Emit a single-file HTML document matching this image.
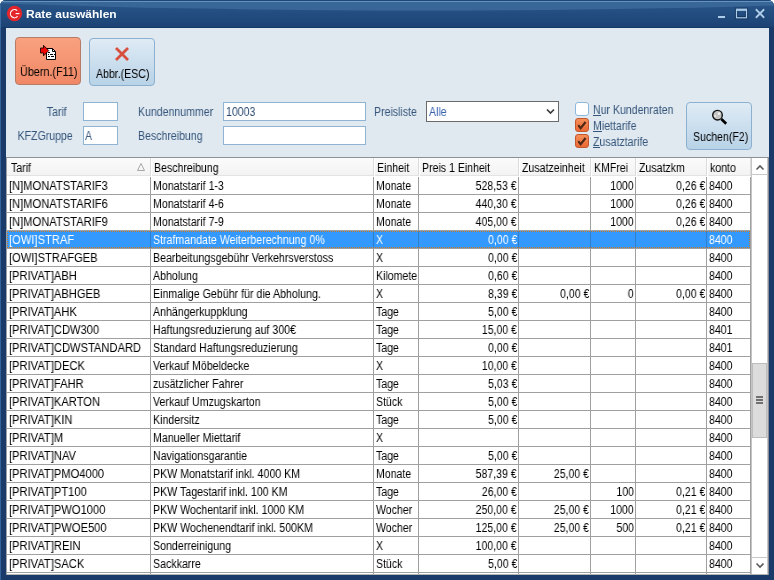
<!DOCTYPE html><html><head><meta charset="utf-8"><style>
*{margin:0;padding:0;box-sizing:border-box}
html,body{width:774px;height:580px;overflow:hidden;background:#ffffff}
body{position:relative;font-family:"Liberation Sans",sans-serif;font-size:12px;line-height:14px;color:#000}
.a{position:absolute}
.t{position:absolute;will-change:transform;white-space:pre;line-height:14px;font-size:12px;transform:scaleX(0.88)}
</style></head><body>
<div class="a" style="left:0;top:0;width:774px;height:580px;background:#1a3a6a;border-radius:6px 6px 0 0;overflow:hidden">
<svg class="a" style="left:0;top:0" width="774" height="28" viewBox="0 0 774 28">
<defs><linearGradient id="tg" x1="0" y1="0" x2="0" y2="1"><stop offset="0" stop-color="#2a578a"/><stop offset="0.4" stop-color="#244f82"/><stop offset="1" stop-color="#1c4273"/></linearGradient>
<linearGradient id="tb" x1="0" y1="0" x2="0" y2="1"><stop offset="0" stop-color="#3d6c9b"/><stop offset="1" stop-color="#386696"/></linearGradient></defs>
<rect x="0" y="0" width="774" height="28" fill="url(#tg)"/>
<ellipse cx="420" cy="-40" rx="815" ry="50.5" fill="url(#tb)"/>
<rect x="0" y="0" width="774" height="1" fill="#1f4677"/>
<rect x="0" y="1" width="774" height="1" fill="#6393bf"/>
<rect x="0" y="27" width="774" height="1" fill="#163a68"/>
</svg>
<div class="a" style="left:0;top:1px;width:1px;height:579px;background:#3a6a9e"></div>
<div class="a" style="left:1px;top:28px;width:1px;height:552px;background:#24528a"></div>
</div>
<svg class="a" style="left:6px;top:5px" width="18" height="18" viewBox="0 0 18 18">
<circle cx="8.5" cy="8.5" r="7.7" fill="#e3262a"/>
<path d="M11.2 5.6 A4.1 4.1 0 1 0 11.6 11.4" fill="none" stroke="#fff" stroke-width="1.15"/>
<path d="M9.6 8.6 H13.4" stroke="#fff" stroke-width="1.15"/>
</svg>
<div class="t " style="top:7px;left:26px;transform-origin:0 0;transform:scaleX(1.09);color:#ffffff;font-weight:bold;font-size:11px;">Rate auswählen</div>
<svg class="a" style="left:714px;top:6px" width="56" height="16" viewBox="0 0 56 16">
<g fill="none" stroke="#0d2445" stroke-width="3.2" opacity=".55">
<path d="M4 11 H11"/><rect x="22.5" y="3.2" width="10" height="8.6"/><path d="M41.8 3.3 L50.2 11.7 M50.2 3.3 L41.8 11.7"/>
</g>
<g fill="none" stroke="#a9cdeb">
<path d="M4 11 H11" stroke-width="2.2"/>
<rect x="22.5" y="3.2" width="10" height="8.6" stroke-width="1.2"/><path d="M22 4 H33" stroke-width="1.8"/>
<path d="M41.8 3.3 L50.2 11.7 M50.2 3.3 L41.8 11.7" stroke-width="2"/>
</g></svg>
<div class="a" style="left:6px;top:28px;width:763px;height:547px;background:#e0e8f0"></div>
<div class="a" style="left:15px;top:37px;width:66px;height:48px;border:1px solid #b67c68;border-radius:4px;background:linear-gradient(#f9a17f,#f08866)"></div>
<div class="a" style="left:89px;top:38px;width:66px;height:48px;border:1px solid #8bb0d0;border-radius:4px;background:linear-gradient(#dfebf5,#b8d2e7)"></div>
<svg class="a" style="left:30px;top:40px" width="36" height="24" viewBox="30 40 36 24">
<path d="M46.5 48.5 H52.5 L55.5 51.5 V59.5 H46.5 Z" fill="#fff" stroke="#000" stroke-width="1"/>
<path d="M52.5 48.5 V51.5 H55.5" fill="none" stroke="#000" stroke-width="1"/>
<path d="M48 52.5 H50 M48 54.5 H49 M50 54.5 H53 M54 54.5 H55 M48 56.5 H50 M51 56.5 H54" stroke="#000" stroke-width="1"/>
<path d="M40.5 48 H43.5 V45.3 L48.8 50.6 L43.5 55.9 V53 H40.5 Z" fill="#f00000" stroke="#000" stroke-width="0.8"/>
</svg>
<div class="t " style="top:65px;left:20px;transform-origin:0 0;transform:scaleX(0.9);">Übern.(F11)</div>
<svg class="a" style="left:113px;top:45px" width="18" height="18" viewBox="0 0 18 18">
<path d="M3 3 L15 15 M15 3 L3 15" stroke="#d94f3d" stroke-width="2.8"/>
</svg>
<div class="t " style="top:67px;left:96px;transform-origin:0 0;">Abbr.(ESC)</div>
<div class="t " style="top:105px;right:707px;transform-origin:100% 0;color:#34567a;">Tarif</div>
<div class="t " style="top:129px;right:701px;transform-origin:100% 0;color:#34567a;">KFZGruppe</div>
<div class="t " style="top:105px;left:138px;transform-origin:0 0;color:#34567a;">Kundennummer</div>
<div class="t " style="top:129px;left:138px;transform-origin:0 0;color:#34567a;">Beschreibung</div>
<div class="t " style="top:105px;left:374px;transform-origin:0 0;color:#34567a;">Preisliste</div>
<div class="a" style="left:83px;top:102px;width:35px;height:19px;background:#fff;border:1px solid #8fb3d3"></div>
<div class="a" style="left:83px;top:126px;width:35px;height:19px;background:#fff;border:1px solid #8fb3d3"></div>
<div class="t " style="top:129px;left:85px;transform-origin:0 0;color:#3b5b80;">A</div>
<div class="a" style="left:223px;top:102px;width:143px;height:19px;background:#fff;border:1px solid #8fb3d3"></div>
<div class="a" style="left:223px;top:126px;width:143px;height:19px;background:#fff;border:1px solid #8fb3d3"></div>
<div class="t " style="top:105px;left:226px;transform-origin:0 0;color:#2c4a70;">10003</div>
<div class="a" style="left:426px;top:101px;width:133px;height:21px;background:#fff;border:1px solid #6a6a6a"></div>
<div class="t " style="top:105px;left:429px;transform-origin:0 0;color:#3560b0;">Alle</div>
<svg class="a" style="left:545px;top:107px" width="11" height="9" viewBox="0 0 11 9">
<path d="M2 2.5 L5.5 6 L9 2.5" fill="none" stroke="#3c3c3c" stroke-width="1.7"/>
</svg>
<div class="a" style="left:575px;top:102px;width:14px;height:14px;border:1px solid #8db8de;border-radius:3px;background:#fff"></div>
<div class="a" style="left:575px;top:118px;width:14px;height:14px;border:1px solid #c4562c;border-radius:3px;background:linear-gradient(#f68e58,#ea6a34)"></div>
<svg class="a" style="left:575px;top:118px" width="14" height="14" viewBox="0 0 14 14"><path d="M3.3 7.2 L5.6 10.2 L10.6 4" fill="none" stroke="#4e2818" stroke-width="2.2"/></svg>
<div class="a" style="left:575px;top:134px;width:14px;height:14px;border:1px solid #c4562c;border-radius:3px;background:linear-gradient(#f68e58,#ea6a34)"></div>
<svg class="a" style="left:575px;top:134px" width="14" height="14" viewBox="0 0 14 14"><path d="M3.3 7.2 L5.6 10.2 L10.6 4" fill="none" stroke="#4e2818" stroke-width="2.2"/></svg>
<div class="t " style="top:103px;left:593px;transform-origin:0 0;color:#34567a;">Nur Kundenraten</div>
<div class="t " style="top:119px;left:593px;transform-origin:0 0;color:#34567a;">Miettarife</div>
<div class="t " style="top:135px;left:593px;transform-origin:0 0;color:#34567a;">Zusatztarife</div>
<div class="a" style="left:593px;top:115px;width:8px;height:1px;background:#34567a"></div>
<div class="a" style="left:593px;top:131px;width:9px;height:1px;background:#34567a"></div>
<div class="a" style="left:593px;top:147px;width:7px;height:1px;background:#34567a"></div>
<div class="a" style="left:686px;top:102px;width:66px;height:48px;border:1px solid #8bb0d0;border-radius:4px;background:linear-gradient(#dfebf5,#b8d2e7)"></div>
<svg class="a" style="left:710px;top:108px" width="20" height="18" viewBox="0 0 20 18">
<path d="M11.3 11 L16.2 15.8" stroke="#000" stroke-width="2.6"/>
<circle cx="7.5" cy="7.2" r="4.8" fill="#c4c4c4" stroke="#111" stroke-width="1.4"/>
<circle cx="9" cy="5.6" r="1.3" fill="#f4f4f4"/>
<circle cx="5.2" cy="8" r="1" fill="#eeeeee"/>
</svg>
<div class="t " style="top:130px;left:693px;transform-origin:0 0;">Suchen(F2)</div>
<div class="a" style="left:6px;top:157px;width:763px;height:418px;background:#fff;border-left:1px solid #9aa0a8;border-top:1px solid #8c9198;border-right:1px solid #8a8e96"></div>
<div class="a" style="left:767px;top:158px;width:1px;height:417px;background:#c6c6c6"></div>
<div class="a" style="left:7px;top:158px;width:744px;height:18px;background:linear-gradient(#fbfbfb,#f3f3f3);border-bottom:1px solid #e3e3e3"></div>
<div class="a" style="left:150px;top:158px;width:1px;height:18px;background:#dcdcdc"></div>
<div class="a" style="left:151px;top:158px;width:1px;height:18px;background:#ffffff"></div>
<div class="a" style="left:373px;top:158px;width:1px;height:18px;background:#dcdcdc"></div>
<div class="a" style="left:374px;top:158px;width:1px;height:18px;background:#ffffff"></div>
<div class="a" style="left:418px;top:158px;width:1px;height:18px;background:#dcdcdc"></div>
<div class="a" style="left:419px;top:158px;width:1px;height:18px;background:#ffffff"></div>
<div class="a" style="left:518px;top:158px;width:1px;height:18px;background:#dcdcdc"></div>
<div class="a" style="left:519px;top:158px;width:1px;height:18px;background:#ffffff"></div>
<div class="a" style="left:590px;top:158px;width:1px;height:18px;background:#dcdcdc"></div>
<div class="a" style="left:591px;top:158px;width:1px;height:18px;background:#ffffff"></div>
<div class="a" style="left:635px;top:158px;width:1px;height:18px;background:#dcdcdc"></div>
<div class="a" style="left:636px;top:158px;width:1px;height:18px;background:#ffffff"></div>
<div class="a" style="left:706px;top:158px;width:1px;height:18px;background:#dcdcdc"></div>
<div class="a" style="left:707px;top:158px;width:1px;height:18px;background:#ffffff"></div>
<div class="a" style="left:750px;top:158px;width:1px;height:18px;background:#dcdcdc"></div>
<div class="t " style="top:161px;left:11px;transform-origin:0 0;">Tarif</div>
<div class="t " style="top:161px;left:154px;transform-origin:0 0;">Beschreibung</div>
<div class="t " style="top:161px;left:377px;transform-origin:0 0;">Einheit</div>
<div class="t " style="top:161px;left:422px;transform-origin:0 0;">Preis 1 Einheit</div>
<div class="t " style="top:161px;left:522px;transform-origin:0 0;">Zusatzeinheit</div>
<div class="t " style="top:161px;left:594px;transform-origin:0 0;">KMFrei</div>
<div class="t " style="top:161px;left:639px;transform-origin:0 0;">Zusatzkm</div>
<div class="t " style="top:161px;left:710px;transform-origin:0 0;">konto</div>
<svg class="a" style="left:136px;top:162px" width="10" height="10" viewBox="0 0 10 10"><path d="M5 1.5 L8.5 8.5 H1.5 Z" fill="none" stroke="#a8a8a8" stroke-width="1"/></svg>
<div class="a" style="left:7px;top:194px;width:744px;height:1px;background:#a0a0a0"></div>
<div class="t " style="top:179px;left:9px;transform-origin:0 0;transform:scaleX(0.93);">[N]MONATSTARIF3</div>
<div class="t " style="top:179px;left:153px;transform-origin:0 0;transform:scaleX(0.886);">Monatstarif 1-3</div>
<div class="t " style="top:179px;left:376px;transform-origin:0 0;">Monate</div>
<div class="t " style="top:179px;right:257px;transform-origin:100% 0;">528,53 €</div>
<div class="t " style="top:179px;right:140px;transform-origin:100% 0;">1000</div>
<div class="t " style="top:179px;right:69px;transform-origin:100% 0;">0,26 €</div>
<div class="t " style="top:179px;left:709px;transform-origin:0 0;">8400</div>
<div class="a" style="left:7px;top:212px;width:744px;height:1px;background:#a0a0a0"></div>
<div class="t " style="top:197px;left:9px;transform-origin:0 0;transform:scaleX(0.93);">[N]MONATSTARIF6</div>
<div class="t " style="top:197px;left:153px;transform-origin:0 0;transform:scaleX(0.886);">Monatstarif 4-6</div>
<div class="t " style="top:197px;left:376px;transform-origin:0 0;">Monate</div>
<div class="t " style="top:197px;right:257px;transform-origin:100% 0;">440,30 €</div>
<div class="t " style="top:197px;right:140px;transform-origin:100% 0;">1000</div>
<div class="t " style="top:197px;right:69px;transform-origin:100% 0;">0,26 €</div>
<div class="t " style="top:197px;left:709px;transform-origin:0 0;">8400</div>
<div class="a" style="left:7px;top:230px;width:744px;height:1px;background:#a0a0a0"></div>
<div class="t " style="top:215px;left:9px;transform-origin:0 0;transform:scaleX(0.93);">[N]MONATSTARIF9</div>
<div class="t " style="top:215px;left:153px;transform-origin:0 0;transform:scaleX(0.886);">Monatstarif 7-9</div>
<div class="t " style="top:215px;left:376px;transform-origin:0 0;">Monate</div>
<div class="t " style="top:215px;right:257px;transform-origin:100% 0;">405,00 €</div>
<div class="t " style="top:215px;right:140px;transform-origin:100% 0;">1000</div>
<div class="t " style="top:215px;right:69px;transform-origin:100% 0;">0,26 €</div>
<div class="t " style="top:215px;left:709px;transform-origin:0 0;">8400</div>
<div class="a" style="left:7px;top:231px;width:743px;height:17px;background:#3399ff"></div>
<div class="a" style="left:7px;top:248px;width:744px;height:1px;background:#a0a0a0"></div>
<div class="t " style="top:233px;left:9px;transform-origin:0 0;transform:scaleX(0.93);color:#ffffff;">[OWI]STRAF</div>
<div class="t " style="top:233px;left:153px;transform-origin:0 0;transform:scaleX(0.886);color:#ffffff;">Strafmandate Weiterberechnung 0%</div>
<div class="t " style="top:233px;left:376px;transform-origin:0 0;color:#ffffff;">X</div>
<div class="t " style="top:233px;right:257px;transform-origin:100% 0;color:#ffffff;">0,00 €</div>
<div class="t " style="top:233px;left:709px;transform-origin:0 0;color:#ffffff;">8400</div>
<div class="a" style="left:7px;top:266px;width:744px;height:1px;background:#a0a0a0"></div>
<div class="t " style="top:251px;left:9px;transform-origin:0 0;transform:scaleX(0.93);">[OWI]STRAFGEB</div>
<div class="t " style="top:251px;left:153px;transform-origin:0 0;transform:scaleX(0.886);">Bearbeitungsgebühr Verkehrsverstoss</div>
<div class="t " style="top:251px;left:376px;transform-origin:0 0;">X</div>
<div class="t " style="top:251px;right:257px;transform-origin:100% 0;">0,00 €</div>
<div class="t " style="top:251px;left:709px;transform-origin:0 0;">8400</div>
<div class="a" style="left:7px;top:284px;width:744px;height:1px;background:#a0a0a0"></div>
<div class="t " style="top:269px;left:9px;transform-origin:0 0;transform:scaleX(0.93);">[PRIVAT]ABH</div>
<div class="t " style="top:269px;left:153px;transform-origin:0 0;transform:scaleX(0.886);">Abholung</div>
<div class="t " style="top:269px;left:376px;transform-origin:0 0;">Kilomete</div>
<div class="t " style="top:269px;right:257px;transform-origin:100% 0;">0,60 €</div>
<div class="t " style="top:269px;left:709px;transform-origin:0 0;">8400</div>
<div class="a" style="left:7px;top:302px;width:744px;height:1px;background:#a0a0a0"></div>
<div class="t " style="top:287px;left:9px;transform-origin:0 0;transform:scaleX(0.93);">[PRIVAT]ABHGEB</div>
<div class="t " style="top:287px;left:153px;transform-origin:0 0;transform:scaleX(0.886);">Einmalige Gebühr für die Abholung.</div>
<div class="t " style="top:287px;left:376px;transform-origin:0 0;">X</div>
<div class="t " style="top:287px;right:257px;transform-origin:100% 0;">8,39 €</div>
<div class="t " style="top:287px;right:185px;transform-origin:100% 0;">0,00 €</div>
<div class="t " style="top:287px;right:140px;transform-origin:100% 0;">0</div>
<div class="t " style="top:287px;right:69px;transform-origin:100% 0;">0,00 €</div>
<div class="t " style="top:287px;left:709px;transform-origin:0 0;">8400</div>
<div class="a" style="left:7px;top:320px;width:744px;height:1px;background:#a0a0a0"></div>
<div class="t " style="top:305px;left:9px;transform-origin:0 0;transform:scaleX(0.93);">[PRIVAT]AHK</div>
<div class="t " style="top:305px;left:153px;transform-origin:0 0;transform:scaleX(0.886);">Anhängerkuppklung</div>
<div class="t " style="top:305px;left:376px;transform-origin:0 0;">Tage</div>
<div class="t " style="top:305px;right:257px;transform-origin:100% 0;">5,00 €</div>
<div class="t " style="top:305px;left:709px;transform-origin:0 0;">8400</div>
<div class="a" style="left:7px;top:338px;width:744px;height:1px;background:#a0a0a0"></div>
<div class="t " style="top:323px;left:9px;transform-origin:0 0;transform:scaleX(0.93);">[PRIVAT]CDW300</div>
<div class="t " style="top:323px;left:153px;transform-origin:0 0;transform:scaleX(0.886);">Haftungsreduzierung auf 300€</div>
<div class="t " style="top:323px;left:376px;transform-origin:0 0;">Tage</div>
<div class="t " style="top:323px;right:257px;transform-origin:100% 0;">15,00 €</div>
<div class="t " style="top:323px;left:709px;transform-origin:0 0;">8401</div>
<div class="a" style="left:7px;top:356px;width:744px;height:1px;background:#a0a0a0"></div>
<div class="t " style="top:341px;left:9px;transform-origin:0 0;transform:scaleX(0.93);">[PRIVAT]CDWSTANDARD</div>
<div class="t " style="top:341px;left:153px;transform-origin:0 0;transform:scaleX(0.886);">Standard Haftungsreduzierung</div>
<div class="t " style="top:341px;left:376px;transform-origin:0 0;">Tage</div>
<div class="t " style="top:341px;right:257px;transform-origin:100% 0;">0,00 €</div>
<div class="t " style="top:341px;left:709px;transform-origin:0 0;">8401</div>
<div class="a" style="left:7px;top:374px;width:744px;height:1px;background:#a0a0a0"></div>
<div class="t " style="top:359px;left:9px;transform-origin:0 0;transform:scaleX(0.93);">[PRIVAT]DECK</div>
<div class="t " style="top:359px;left:153px;transform-origin:0 0;transform:scaleX(0.886);">Verkauf Möbeldecke</div>
<div class="t " style="top:359px;left:376px;transform-origin:0 0;">X</div>
<div class="t " style="top:359px;right:257px;transform-origin:100% 0;">10,00 €</div>
<div class="t " style="top:359px;left:709px;transform-origin:0 0;">8400</div>
<div class="a" style="left:7px;top:392px;width:744px;height:1px;background:#a0a0a0"></div>
<div class="t " style="top:377px;left:9px;transform-origin:0 0;transform:scaleX(0.93);">[PRIVAT]FAHR</div>
<div class="t " style="top:377px;left:153px;transform-origin:0 0;transform:scaleX(0.886);">zusätzlicher Fahrer</div>
<div class="t " style="top:377px;left:376px;transform-origin:0 0;">Tage</div>
<div class="t " style="top:377px;right:257px;transform-origin:100% 0;">5,03 €</div>
<div class="t " style="top:377px;left:709px;transform-origin:0 0;">8400</div>
<div class="a" style="left:7px;top:410px;width:744px;height:1px;background:#a0a0a0"></div>
<div class="t " style="top:395px;left:9px;transform-origin:0 0;transform:scaleX(0.93);">[PRIVAT]KARTON</div>
<div class="t " style="top:395px;left:153px;transform-origin:0 0;transform:scaleX(0.886);">Verkauf Umzugskarton</div>
<div class="t " style="top:395px;left:376px;transform-origin:0 0;">Stück</div>
<div class="t " style="top:395px;right:257px;transform-origin:100% 0;">5,00 €</div>
<div class="t " style="top:395px;left:709px;transform-origin:0 0;">8400</div>
<div class="a" style="left:7px;top:428px;width:744px;height:1px;background:#a0a0a0"></div>
<div class="t " style="top:413px;left:9px;transform-origin:0 0;transform:scaleX(0.93);">[PRIVAT]KIN</div>
<div class="t " style="top:413px;left:153px;transform-origin:0 0;transform:scaleX(0.886);">Kindersitz</div>
<div class="t " style="top:413px;left:376px;transform-origin:0 0;">Tage</div>
<div class="t " style="top:413px;right:257px;transform-origin:100% 0;">5,00 €</div>
<div class="t " style="top:413px;left:709px;transform-origin:0 0;">8400</div>
<div class="a" style="left:7px;top:446px;width:744px;height:1px;background:#a0a0a0"></div>
<div class="t " style="top:431px;left:9px;transform-origin:0 0;transform:scaleX(0.93);">[PRIVAT]M</div>
<div class="t " style="top:431px;left:153px;transform-origin:0 0;transform:scaleX(0.886);">Manueller Miettarif</div>
<div class="t " style="top:431px;left:376px;transform-origin:0 0;">X</div>
<div class="t " style="top:431px;left:709px;transform-origin:0 0;">8400</div>
<div class="a" style="left:7px;top:464px;width:744px;height:1px;background:#a0a0a0"></div>
<div class="t " style="top:449px;left:9px;transform-origin:0 0;transform:scaleX(0.93);">[PRIVAT]NAV</div>
<div class="t " style="top:449px;left:153px;transform-origin:0 0;transform:scaleX(0.886);">Navigationsgarantie</div>
<div class="t " style="top:449px;left:376px;transform-origin:0 0;">Tage</div>
<div class="t " style="top:449px;right:257px;transform-origin:100% 0;">5,00 €</div>
<div class="t " style="top:449px;left:709px;transform-origin:0 0;">8400</div>
<div class="a" style="left:7px;top:482px;width:744px;height:1px;background:#a0a0a0"></div>
<div class="t " style="top:467px;left:9px;transform-origin:0 0;transform:scaleX(0.93);">[PRIVAT]PMO4000</div>
<div class="t " style="top:467px;left:153px;transform-origin:0 0;transform:scaleX(0.886);">PKW Monatstarif inkl. 4000 KM</div>
<div class="t " style="top:467px;left:376px;transform-origin:0 0;">Monate</div>
<div class="t " style="top:467px;right:257px;transform-origin:100% 0;">587,39 €</div>
<div class="t " style="top:467px;right:185px;transform-origin:100% 0;">25,00 €</div>
<div class="t " style="top:467px;left:709px;transform-origin:0 0;">8400</div>
<div class="a" style="left:7px;top:500px;width:744px;height:1px;background:#a0a0a0"></div>
<div class="t " style="top:485px;left:9px;transform-origin:0 0;transform:scaleX(0.93);">[PRIVAT]PT100</div>
<div class="t " style="top:485px;left:153px;transform-origin:0 0;transform:scaleX(0.886);">PKW Tagestarif inkl. 100 KM</div>
<div class="t " style="top:485px;left:376px;transform-origin:0 0;">Tage</div>
<div class="t " style="top:485px;right:257px;transform-origin:100% 0;">26,00 €</div>
<div class="t " style="top:485px;right:140px;transform-origin:100% 0;">100</div>
<div class="t " style="top:485px;right:69px;transform-origin:100% 0;">0,21 €</div>
<div class="t " style="top:485px;left:709px;transform-origin:0 0;">8400</div>
<div class="a" style="left:7px;top:518px;width:744px;height:1px;background:#a0a0a0"></div>
<div class="t " style="top:503px;left:9px;transform-origin:0 0;transform:scaleX(0.93);">[PRIVAT]PWO1000</div>
<div class="t " style="top:503px;left:153px;transform-origin:0 0;transform:scaleX(0.886);">PKW Wochentarif inkl. 1000 KM</div>
<div class="t " style="top:503px;left:376px;transform-origin:0 0;">Wocher</div>
<div class="t " style="top:503px;right:257px;transform-origin:100% 0;">250,00 €</div>
<div class="t " style="top:503px;right:185px;transform-origin:100% 0;">25,00 €</div>
<div class="t " style="top:503px;right:140px;transform-origin:100% 0;">1000</div>
<div class="t " style="top:503px;right:69px;transform-origin:100% 0;">0,21 €</div>
<div class="t " style="top:503px;left:709px;transform-origin:0 0;">8400</div>
<div class="a" style="left:7px;top:536px;width:744px;height:1px;background:#a0a0a0"></div>
<div class="t " style="top:521px;left:9px;transform-origin:0 0;transform:scaleX(0.93);">[PRIVAT]PWOE500</div>
<div class="t " style="top:521px;left:153px;transform-origin:0 0;transform:scaleX(0.886);">PKW Wochenendtarif inkl. 500KM</div>
<div class="t " style="top:521px;left:376px;transform-origin:0 0;">Wocher</div>
<div class="t " style="top:521px;right:257px;transform-origin:100% 0;">125,00 €</div>
<div class="t " style="top:521px;right:185px;transform-origin:100% 0;">25,00 €</div>
<div class="t " style="top:521px;right:140px;transform-origin:100% 0;">500</div>
<div class="t " style="top:521px;right:69px;transform-origin:100% 0;">0,21 €</div>
<div class="t " style="top:521px;left:709px;transform-origin:0 0;">8400</div>
<div class="a" style="left:7px;top:554px;width:744px;height:1px;background:#a0a0a0"></div>
<div class="t " style="top:539px;left:9px;transform-origin:0 0;transform:scaleX(0.93);">[PRIVAT]REIN</div>
<div class="t " style="top:539px;left:153px;transform-origin:0 0;transform:scaleX(0.886);">Sonderreinigung</div>
<div class="t " style="top:539px;left:376px;transform-origin:0 0;">X</div>
<div class="t " style="top:539px;right:257px;transform-origin:100% 0;">100,00 €</div>
<div class="t " style="top:539px;left:709px;transform-origin:0 0;">8400</div>
<div class="a" style="left:7px;top:572px;width:744px;height:1px;background:#a0a0a0"></div>
<div class="t " style="top:557px;left:9px;transform-origin:0 0;transform:scaleX(0.93);">[PRIVAT]SACK</div>
<div class="t " style="top:557px;left:153px;transform-origin:0 0;transform:scaleX(0.886);">Sackkarre</div>
<div class="t " style="top:557px;left:376px;transform-origin:0 0;">Stück</div>
<div class="t " style="top:557px;right:257px;transform-origin:100% 0;">5,00 €</div>
<div class="t " style="top:557px;left:709px;transform-origin:0 0;">8400</div>
<div class="a" style="left:150px;top:177px;width:1px;height:398px;background:#a0a0a0"></div>
<div class="a" style="left:373px;top:177px;width:1px;height:398px;background:#a0a0a0"></div>
<div class="a" style="left:418px;top:177px;width:1px;height:398px;background:#a0a0a0"></div>
<div class="a" style="left:518px;top:177px;width:1px;height:398px;background:#a0a0a0"></div>
<div class="a" style="left:590px;top:177px;width:1px;height:398px;background:#a0a0a0"></div>
<div class="a" style="left:635px;top:177px;width:1px;height:398px;background:#a0a0a0"></div>
<div class="a" style="left:706px;top:177px;width:1px;height:398px;background:#a0a0a0"></div>
<div class="a" style="left:750px;top:177px;width:1px;height:398px;background:#a0a0a0"></div>
<div class="a" style="left:150px;top:231px;width:1px;height:17px;background:#2f7ed0"></div>
<div class="a" style="left:373px;top:231px;width:1px;height:17px;background:#2f7ed0"></div>
<div class="a" style="left:418px;top:231px;width:1px;height:17px;background:#2f7ed0"></div>
<div class="a" style="left:518px;top:231px;width:1px;height:17px;background:#2f7ed0"></div>
<div class="a" style="left:590px;top:231px;width:1px;height:17px;background:#2f7ed0"></div>
<div class="a" style="left:635px;top:231px;width:1px;height:17px;background:#2f7ed0"></div>
<div class="a" style="left:706px;top:231px;width:1px;height:17px;background:#2f7ed0"></div>
<div class="a" style="left:7px;top:231px;width:743px;height:17px;border:1px dotted #c77b2a"></div>
<div class="a" style="left:751px;top:158px;width:1px;height:417px;background:#c4c4c4"></div>
<div class="a" style="left:752px;top:158px;width:15px;height:416px;background:#ffffff"></div>
<div class="a" style="left:752px;top:174px;width:15px;height:1px;background:#c8c8c8"></div>
<svg class="a" style="left:754px;top:162px" width="12" height="10" viewBox="0 0 12 10"><path d="M2.5 7.5 L6 4 L9.5 7.5" fill="none" stroke="#5a5a5a" stroke-width="1.6"/></svg>
<div class="a" style="left:752px;top:557px;width:15px;height:1px;background:#c8c8c8"></div>
<svg class="a" style="left:754px;top:560px" width="12" height="10" viewBox="0 0 12 10"><path d="M2.5 3.5 L6 7 L9.5 3.5" fill="none" stroke="#5a5a5a" stroke-width="1.6"/></svg>
<div class="a" style="left:752px;top:363px;width:15px;height:75px;background:#dcdcdc;border:1px solid #bdbdbd"></div>
<div class="a" style="left:756px;top:396px;width:7px;height:2px;background:#707070"></div>
<div class="a" style="left:756px;top:399px;width:7px;height:2px;background:#707070"></div>
<div class="a" style="left:756px;top:402px;width:7px;height:2px;background:#707070"></div>
<div class="a" style="left:7px;top:574px;width:761px;height:1px;background:#b4b4b4"></div>
<div class="a" style="left:0;top:575px;width:774px;height:5px;background:#1a3a6a"></div>
<div class="a" style="left:0;top:575px;width:1px;height:5px;background:#3a6a9e"></div>
<div class="a" style="left:769px;top:28px;width:5px;height:552px;background:#1a3a6a"></div>
<div class="a" style="left:0;top:28px;width:6px;height:552px;background:#1a3a6a"></div>
<div class="a" style="left:0;top:28px;width:1px;height:552px;background:#33639a"></div>
</body></html>
